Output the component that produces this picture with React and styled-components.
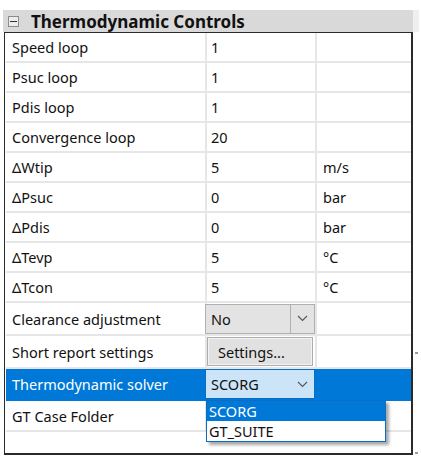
import styled, { createGlobalStyle } from "styled-components";

const GlobalStyle = createGlobalStyle`
  body {
    margin: 0;
    background: #ffffff;
    font-family: "Noto Sans", "Open Sans", sans-serif;
  }
`;

const Page = styled.div`
  padding: 10px 0 0 3px;
  width: 421px;
  height: 462px;
  box-sizing: border-box;
  position: relative;
`;

const Header = styled.div`
  width: 410px;
  height: 22px;
  background: #d9d9d9;
  display: flex;
  align-items: center;
  gap: 12px;
  padding-left: 5px;
  box-sizing: border-box;
  position: relative;

  &::after {
    content: "";
    position: absolute;
    right: -6px;
    top: 0;
    width: 6px;
    height: 100%;
    background: #efefef;
  }
`;

const Toggle = styled.span`
  width: 9px;
  height: 9px;
  border: 1px solid #8c8c8c;
  background: #ececec;
  display: flex;
  align-items: center;
  justify-content: center;

  &::before {
    content: "";
    width: 7px;
    height: 1px;
    background: #333;
  }
`;

const Title = styled.span`
  font-weight: 700;
  font-size: 17px;
  color: #111;
`;

const Grid = styled.div`
  margin-left: 1px;
  width: 409px;
  height: 423px;
  box-sizing: border-box;
  border-top: 1px solid #2a2a2a;
  border-left: 1px solid #2a2a2a;
  border-right: 2px solid #2a2a2a;
  border-bottom: 2px solid #2a2a2a;
  padding-left: 1px;
  position: relative;
`;

const Row = styled.div`
  display: grid;
  grid-template-columns: 201px 110px 1fr;
  height: ${(p) => p.$h}px;
  border-bottom: 2px solid ${(p) => (p.$active ? "#0078d7" : "#e6e6e6")};
  box-sizing: border-box;
  background: ${(p) => (p.$active ? "#0078d7" : "transparent")};
`;

const Cell = styled.div`
  display: flex;
  align-items: center;
  padding-left: ${(p) => p.$pad ?? 6}px;
  border-right: ${(p) =>
    p.$last ? "none" : `2px solid ${p.$active ? "#0078d7" : "#e6e6e6"}`};
  font-size: 14.5px;
  color: ${(p) => (p.$active ? "#ffffff" : "#111")};
  white-space: nowrap;
  position: relative;
`;

const Combo = styled.div`
  width: 110px;
  height: 30px;
  margin-left: -2px;
  box-sizing: border-box;
  display: flex;
  align-items: stretch;
  border: 1px solid ${(p) => (p.$focus ? "#0a6fc4" : "#b0b0b0")};
  background: ${(p) => (p.$focus ? "#cce4f7" : "#e3e3e3")};
  color: #111;
  font-size: 14.5px;
`;

const ComboText = styled.span`
  flex: 1;
  display: flex;
  align-items: center;
  padding-left: 5px;
`;

const ComboArrow = styled.span`
  width: 23px;
  display: flex;
  align-items: center;
  justify-content: center;
  border-left: ${(p) => (p.$split ? "1px solid #b0b0b0" : "none")};
`;

const Button = styled.div`
  width: 106px;
  height: 29px;
  box-sizing: border-box;
  border: 1px solid #adadad;
  background: #e1e1e1;
  display: flex;
  align-items: center;
  padding-left: 10px;
  font-size: 14.5px;
  color: #111;
  box-shadow: inset 0 0 0 1px #f2f2f2;
`;

const List = styled.div`
  position: absolute;
  left: 201px;
  top: 367px;
  width: 180px;
  box-sizing: border-box;
  border: 1px solid #0a6fc4;
  background: #ffffff;
  box-shadow: 3px 3px 3px rgba(0, 0, 0, 0.35);
  z-index: 2;
`;

const Option = styled.div`
  height: 20px;
  display: flex;
  align-items: center;
  padding-left: 2px;
  font-size: 14.5px;
  background: ${(p) => (p.$sel ? "#0078d7" : "#ffffff")};
  color: ${(p) => (p.$sel ? "#ffffff" : "#111")};
`;

const Tick = styled.span`
  position: absolute;
  left: 415px;
  top: ${(p) => p.$y}px;
  width: 3px;
  height: 2px;
  background: #9a9a9a;
`;

const Chevron = () => (
  <svg width="11" height="7" viewBox="0 0 11 7">
    <path d="M1 1 L5.5 5.5 L10 1" fill="none" stroke="#555" strokeWidth="1.1" />
  </svg>
);

const rows = [
  ["Speed loop", "1", ""],
  ["Psuc loop", "1", ""],
  ["Pdis loop", "1", ""],
  ["Convergence loop", "20", ""],
  ["ΔWtip", "5", "m/s"],
  ["ΔPsuc", "0", "bar"],
  ["ΔPdis", "0", "bar"],
  ["ΔTevp", "5", "°C"],
  ["ΔTcon", "5", "°C"],
];

export default function App() {
  return (
    <Page>
      <GlobalStyle />
      <Header>
        <Toggle />
        <Title>Thermodynamic Controls</Title>
      </Header>
      <Grid>
        {rows.map(([label, value, unit]) => (
          <Row key={label} $h={30}>
            <Cell>{label}</Cell>
            <Cell $pad={4}>{value}</Cell>
            <Cell $last>{unit}</Cell>
          </Row>
        ))}
        <Row $h={33}>
          <Cell>Clearance adjustment</Cell>
          <Cell $pad={0}>
            <Combo>
              <ComboText>No</ComboText>
              <ComboArrow $split>
                <Chevron />
              </ComboArrow>
            </Combo>
          </Cell>
          <Cell $last />
        </Row>
        <Row $h={33}>
          <Cell>Short report settings</Cell>
          <Cell $pad={0}>
            <Button>Settings...</Button>
          </Cell>
          <Cell $last />
        </Row>
        <Row $h={32} $active>
          <Cell $active>Thermodynamic solver</Cell>
          <Cell $pad={0} $active>
            <Combo $focus>
              <ComboText>SCORG</ComboText>
              <ComboArrow>
                <Chevron />
              </ComboArrow>
            </Combo>
          </Cell>
          <Cell $last />
        </Row>
        <Row $h={31}>
          <Cell>GT Case Folder</Cell>
          <Cell />
          <Cell $last />
        </Row>
        <List>
          <Option $sel>SCORG</Option>
          <Option>GT_SUITE</Option>
        </List>
      </Grid>
      <Tick $y={352} />
      <Tick $y={452} />
    </Page>
  );
}
